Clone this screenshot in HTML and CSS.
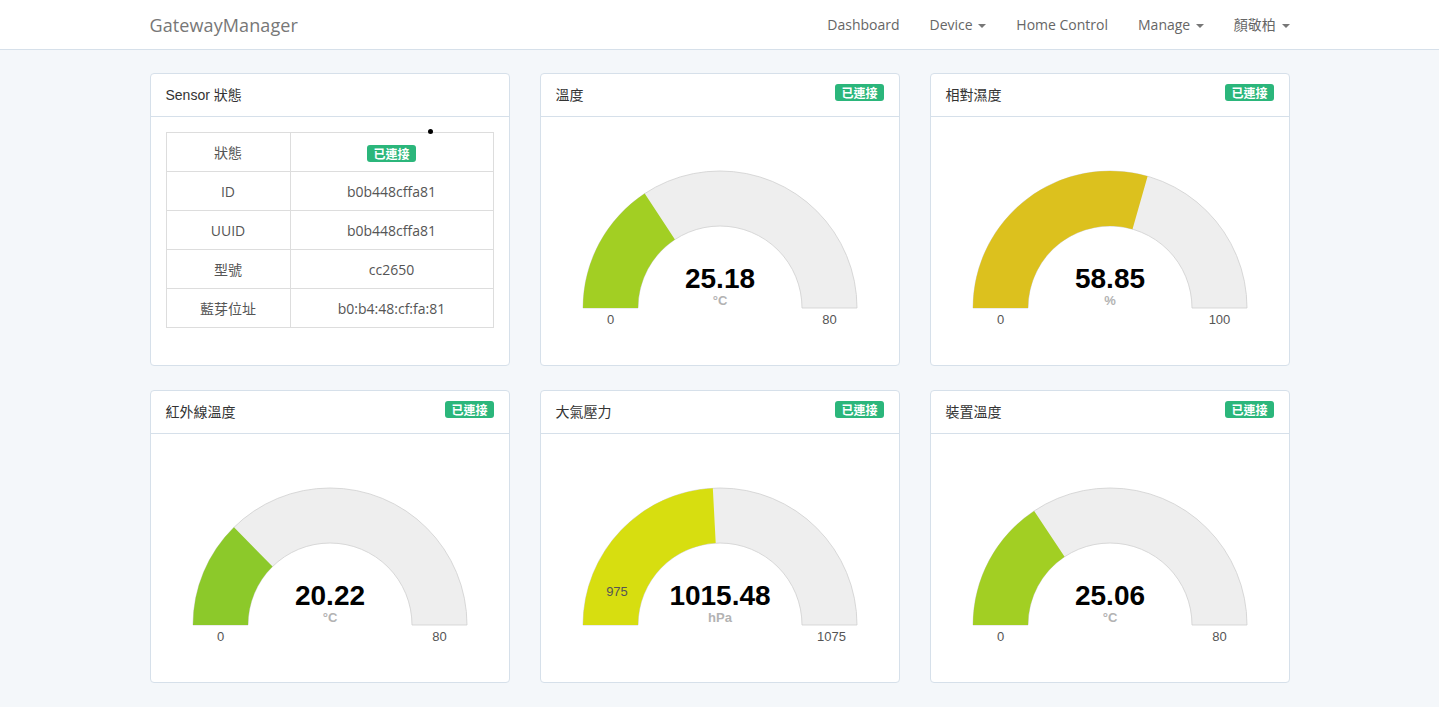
FILE: index.html
```html
<!DOCTYPE html>
<html lang="zh-Hant">
<head>
<meta charset="utf-8">
<title>GatewayManager</title>
<link rel="stylesheet" href="styles.css">
</head>
<body>
<nav class="navbar">
  <div class="nav-inner">
    <a class="brand" href="#">GatewayManager</a>
    <ul class="nav">
      <li><a href="#">Dashboard</a></li>
      <li><a href="#">Device <span class="caret"></span></a></li>
      <li><a href="#">Home Control</a></li>
      <li><a href="#">Manage <span class="caret"></span></a></li>
      <li><a href="#">顏敬柏 <span class="caret"></span></a></li>
    </ul>
  </div>
</nav>

<main class="grid">
  <section class="card sensor">
    <header class="card-head"><span class="title">Sensor 狀態</span></header>
    <div class="card-body">
      <span class="dot"></span>
      <table class="info">
        <tr><td>狀態</td><td><span class="badge">已連接</span></td></tr>
        <tr><td>ID</td><td>b0b448cffa81</td></tr>
        <tr><td>UUID</td><td>b0b448cffa81</td></tr>
        <tr><td>型號</td><td>cc2650</td></tr>
        <tr><td>藍芽位址</td><td>b0:b4:48:cf:fa:81</td></tr>
      </table>
    </div>
  </section>

  <section class="card">
    <header class="card-head"><span class="title">溫度</span><span class="badge">已連接</span></header>
    <div class="card-body">
      <svg class="gauge" viewBox="0 0 358 248" width="358" height="248">
        <path class="g-bg" d="M42 191 A137 137 0 0 1 316 191 L261 191 A82 82 0 0 0 97 191 Z"/>
        <path fill="#a2cf23" d="M42 191 A137 137 0 0 1 103.7 76.55 L133.93 122.5 A82 82 0 0 0 97 191 Z"/>
        <text class="g-val" x="179" y="171">25.18</text>
        <text class="g-unit" x="179" y="188">°C</text>
        <text class="g-lbl" x="69.5" y="207">0</text>
        <text class="g-lbl" x="288.5" y="207">80</text>
      </svg>
    </div>
  </section>

  <section class="card">
    <header class="card-head"><span class="title">相對濕度</span><span class="badge">已連接</span></header>
    <div class="card-body">
      <svg class="gauge" viewBox="0 0 358 248" width="358" height="248">
        <path class="g-bg" d="M42 191 A137 137 0 0 1 316 191 L261 191 A82 82 0 0 0 97 191 Z"/>
        <path fill="#dcc11e" d="M42 191 A137 137 0 0 1 216.6 59.26 L201.5 112.15 A82 82 0 0 0 97 191 Z"/>
        <text class="g-val" x="179" y="171">58.85</text>
        <text class="g-unit" x="179" y="188">%</text>
        <text class="g-lbl" x="69.5" y="207">0</text>
        <text class="g-lbl" x="288.5" y="207">100</text>
      </svg>
    </div>
  </section>

  <section class="card">
    <header class="card-head"><span class="title">紅外線溫度</span><span class="badge">已連接</span></header>
    <div class="card-body">
      <svg class="gauge" viewBox="0 0 358 248" width="358" height="248">
        <path class="g-bg" d="M42 191 A137 137 0 0 1 316 191 L261 191 A82 82 0 0 0 97 191 Z"/>
        <path fill="#8cc92a" d="M42 191 A137 137 0 0 1 82.98 93.28 L121.53 132.51 A82 82 0 0 0 97 191 Z"/>
        <text class="g-val" x="179" y="171">20.22</text>
        <text class="g-unit" x="179" y="188">°C</text>
        <text class="g-lbl" x="69.5" y="207">0</text>
        <text class="g-lbl" x="288.5" y="207">80</text>
      </svg>
    </div>
  </section>

  <section class="card">
    <header class="card-head"><span class="title">大氣壓力</span><span class="badge">已連接</span></header>
    <div class="card-body">
      <svg class="gauge" viewBox="0 0 358 248" width="358" height="248">
        <path class="g-bg" d="M42 191 A137 137 0 0 1 316 191 L261 191 A82 82 0 0 0 97 191 Z"/>
        <path fill="#d7de10" d="M42 191 A137 137 0 0 1 171.83 54.2 L174.71 109.11 A82 82 0 0 0 97 191 Z"/>
        <text class="g-val" x="179" y="171">1015.48</text>
        <text class="g-unit" x="179" y="188">hPa</text>
        <text class="g-lbl" x="76" y="162">975</text>
        <text class="g-lbl" x="290.5" y="207">1075</text>
      </svg>
    </div>
  </section>

  <section class="card">
    <header class="card-head"><span class="title">裝置溫度</span><span class="badge">已連接</span></header>
    <div class="card-body">
      <svg class="gauge" viewBox="0 0 358 248" width="358" height="248">
        <path class="g-bg" d="M42 191 A137 137 0 0 1 316 191 L261 191 A82 82 0 0 0 97 191 Z"/>
        <path fill="#a2cf23" d="M42 191 A137 137 0 0 1 103.16 76.91 L133.6 122.71 A82 82 0 0 0 97 191 Z"/>
        <text class="g-val" x="179" y="171">25.06</text>
        <text class="g-unit" x="179" y="188">°C</text>
        <text class="g-lbl" x="69.5" y="207">0</text>
        <text class="g-lbl" x="288.5" y="207">80</text>
      </svg>
    </div>
  </section>
</main>
</body>
</html>
```

FILE: styles.css
```css
* { box-sizing: border-box; }

html, body {
  margin: 0;
  padding: 0;
}

body {
  background: #f4f7fa;
  font-family: "Open Sans", "Noto Sans CJK TC", sans-serif;
  font-size: 14px;
  color: #555;
}

a { text-decoration: none; }

.navbar {
  background: #fff;
  border-bottom: 1px solid #d6e0ea;
  height: 50px;
}

.nav-inner {
  width: 1140px;
  margin: 0 auto;
  height: 49px;
  display: flex;
  align-items: center;
  justify-content: space-between;
}

.brand {
  font-size: 18px;
  color: #777;
  letter-spacing: 0.1px;
}

.nav {
  list-style: none;
  margin: 0 -15px 0 0;
  padding: 0;
  display: flex;
}

.nav a {
  display: block;
  padding: 0 15px;
  font-size: 14px;
  color: #666;
  line-height: 49px;
}

.caret {
  display: inline-block;
  width: 0;
  height: 0;
  margin-left: 2px;
  vertical-align: middle;
  border-top: 4px solid #777;
  border-left: 4px solid transparent;
  border-right: 4px solid transparent;
}

.grid {
  width: 1140px;
  margin: 23px auto 0;
  display: grid;
  grid-template-columns: repeat(3, 360px);
  column-gap: 30px;
  row-gap: 24px;
  padding-bottom: 20px;
}

.card {
  background: #fff;
  border: 1px solid #d6e0ea;
  border-radius: 4px;
  height: 293px;
  position: relative;
}

.card-head {
  height: 43px;
  border-bottom: 1px solid #d6e0ea;
  padding: 0 15px 2px;
  display: flex;
  align-items: center;
  justify-content: space-between;
}

.title {
  font-family: "Liberation Sans", "Noto Sans CJK TC", sans-serif;
  font-size: 14px;
  color: #333;
}

.badge {
  display: inline-block;
  background: #2bb67b;
  color: #fff;
  font-family: "Noto Sans CJK TC", sans-serif;
  font-weight: 700;
  font-size: 12px;
  line-height: 17px;
  height: 17px;
  padding: 0 6px;
  border-radius: 3px;
  margin-top: -4px;
}

.card-body {
  position: relative;
}

.sensor .card-body {
  padding: 15px;
}

.dot {
  position: absolute;
  left: 277px;
  top: 12px;
  width: 5px;
  height: 5px;
  border-radius: 50%;
  background: #000;
}

.info {
  width: 328px;
  border-collapse: collapse;
}

.info td {
  border: 1px solid #dddddd;
  height: 39px;
  text-align: center;
  vertical-align: middle;
  padding: 0;
  color: #555;
  font-size: 14px;
}

.info td:first-child { width: 124px; }

.info .badge { margin-top: 0; vertical-align: middle; }

.gauge {
  display: block;
}

.g-bg {
  fill: #eeeeee;
  stroke: #cfcfcf;
  stroke-width: 0.8;
}

.g-val {
  font-family: "Liberation Sans", sans-serif;
  font-weight: 700;
  font-size: 28px;
  fill: #010101;
  text-anchor: middle;
}

.g-unit {
  font-family: "Liberation Sans", sans-serif;
  font-weight: 700;
  font-size: 13px;
  fill: #b3b3b3;
  text-anchor: middle;
}

.g-lbl {
  font-family: "Liberation Sans", sans-serif;
  font-size: 13px;
  fill: #555;
  text-anchor: middle;
}
```
